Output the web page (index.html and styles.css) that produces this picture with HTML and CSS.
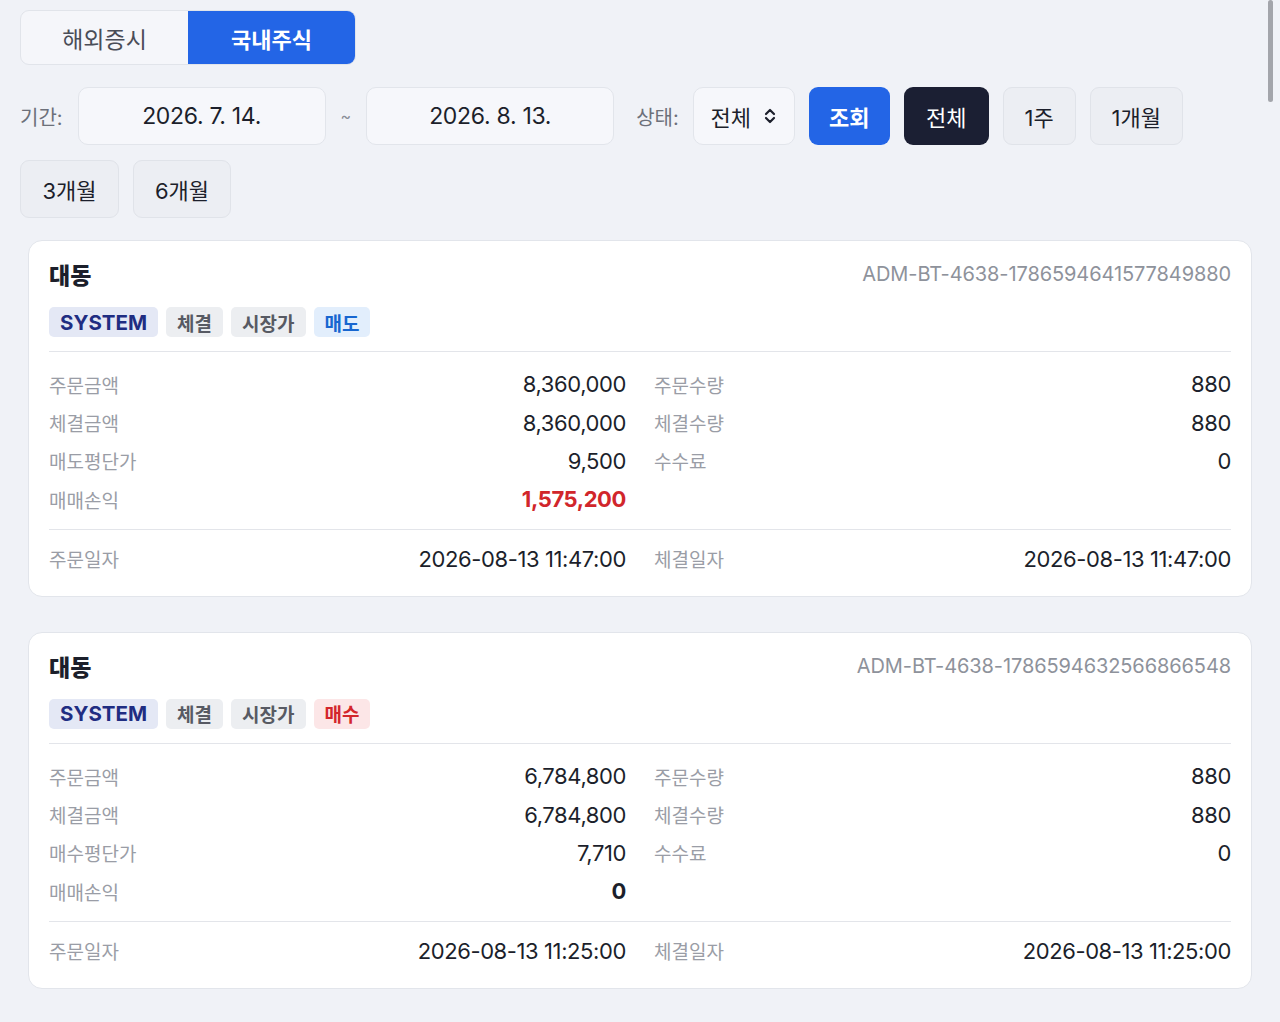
FILE: index.html
```html
<!DOCTYPE html>
<html lang="ko">
<head>
    <meta charset="UTF-8">
    <meta name="viewport" content="width=device-width, initial-scale=1.0">
    <title>주문내역</title>
    <link rel="stylesheet" href="styles.css">
</head>
<body>
    <div class="tabs">
        <button class="tab">해외증시</button>
        <button class="tab active">국내주식</button>
    </div>

    <div class="filters">
        <span class="filterLabel">기간:</span>
        <div class="dateBox">2026. 7. 14.</div>
        <span class="tilde">~</span>
        <div class="dateBox">2026. 8. 13.</div>
        <span class="filterLabel status">상태:</span>
        <div class="selectBox">
            전체
            <svg width="14" height="18" viewBox="0 0 14 18" fill="none" stroke="#1c1f2b" stroke-width="2.2" stroke-linecap="round" stroke-linejoin="round">
                <polyline points="3,7 7,3 11,7"/>
                <polyline points="3,11 7,15 11,11"/>
            </svg>
        </div>
        <button class="btn primary">조회</button>
        <button class="btn dark">전체</button>
        <button class="btn light w73">1주</button>
        <button class="btn light w93">1개월</button>
        <button class="btn light w99">3개월</button>
        <button class="btn light w98">6개월</button>
    </div>

    <div class="cardList">
        <div class="card">
            <div class="cardHead">
                <h2>대동</h2>
                <span class="orderId">ADM-BT-4638-1786594641577849880</span>
            </div>
            <div class="tags">
                <span class="tag system">SYSTEM</span>
                <span class="tag gray">체결</span>
                <span class="tag gray">시장가</span>
                <span class="tag sell">매도</span>
            </div>
            <div class="grid">
                <div class="col">
                    <div class="row"><span class="lbl">주문금액</span><span class="val">8,360,000</span></div>
                    <div class="row"><span class="lbl">체결금액</span><span class="val">8,360,000</span></div>
                    <div class="row"><span class="lbl">매도평단가</span><span class="val">9,500</span></div>
                    <div class="row"><span class="lbl">매매손익</span><span class="val bold red">1,575,200</span></div>
                </div>
                <div class="col">
                    <div class="row"><span class="lbl">주문수량</span><span class="val">880</span></div>
                    <div class="row"><span class="lbl">체결수량</span><span class="val">880</span></div>
                    <div class="row"><span class="lbl">수수료</span><span class="val">0</span></div>
                </div>
            </div>
            <div class="grid dates">
                <div class="row"><span class="lbl">주문일자</span><span class="val">2026-08-13 11:47:00</span></div>
                <div class="row"><span class="lbl">체결일자</span><span class="val">2026-08-13 11:47:00</span></div>
            </div>
        </div>

        <div class="card">
            <div class="cardHead">
                <h2>대동</h2>
                <span class="orderId">ADM-BT-4638-1786594632566866548</span>
            </div>
            <div class="tags">
                <span class="tag system">SYSTEM</span>
                <span class="tag gray">체결</span>
                <span class="tag gray">시장가</span>
                <span class="tag buy">매수</span>
            </div>
            <div class="grid">
                <div class="col">
                    <div class="row"><span class="lbl">주문금액</span><span class="val">6,784,800</span></div>
                    <div class="row"><span class="lbl">체결금액</span><span class="val">6,784,800</span></div>
                    <div class="row"><span class="lbl">매수평단가</span><span class="val">7,710</span></div>
                    <div class="row"><span class="lbl">매매손익</span><span class="val bold">0</span></div>
                </div>
                <div class="col">
                    <div class="row"><span class="lbl">주문수량</span><span class="val">880</span></div>
                    <div class="row"><span class="lbl">체결수량</span><span class="val">880</span></div>
                    <div class="row"><span class="lbl">수수료</span><span class="val">0</span></div>
                </div>
            </div>
            <div class="grid dates">
                <div class="row"><span class="lbl">주문일자</span><span class="val">2026-08-13 11:25:00</span></div>
                <div class="row"><span class="lbl">체결일자</span><span class="val">2026-08-13 11:25:00</span></div>
            </div>
        </div>
    </div>

    <div class="scrollThumb"></div>
</body>
</html>
```

FILE: styles.css
```css
html {
    overflow: hidden;
}

body {
    margin: 0;
    padding: 10px 20px;
    background-color: #f0f2f7;
    color: #1c1f2b;
    font-family: Inter, "Noto Sans CJK KR", sans-serif;
}

button {
    font-family: inherit;
    cursor: pointer;
}

/* market tabs */
.tabs {
    display: flex;
    width: 336px;
    height: 55px;
    border: 1px solid #e1e4ea;
    border-radius: 9px;
    overflow: hidden;
    box-sizing: border-box;
    background-color: #f5f6fa;
}

.tab {
    flex: 1;
    border: none;
    background: none;
    font-size: 23px;
    color: #4a4d57;
}

.tab.active {
    background-color: #2365e6;
    color: white;
    font-weight: 700;
    font-size: 22px;
}

/* filter bar */
.filters {
    display: flex;
    flex-wrap: wrap;
    align-items: center;
    gap: 15px 14px;
    margin-top: 22px;
}

.filterLabel {
    font-size: 20px;
    color: #6c707a;
    margin-right: 1px;
}

.filterLabel.status {
    margin-left: 8px;
    margin-right: 0;
}

.tilde {
    font-size: 16px;
    color: #8a8e98;
    margin: 0 1px;
}

.dateBox {
    width: 248px;
    height: 58px;
    box-sizing: border-box;
    display: flex;
    align-items: center;
    justify-content: center;
    font-size: 23px;
    letter-spacing: -0.3px;
    background-color: #f6f7fb;
    border: 1px solid #e2e5eb;
    border-radius: 10px;
}

.selectBox {
    width: 102px;
    height: 58px;
    box-sizing: border-box;
    display: flex;
    align-items: center;
    justify-content: center;
    gap: 12px;
    font-size: 22px;
    background-color: #f6f7fb;
    border: 1px solid #e2e5eb;
    border-radius: 10px;
}

.btn {
    height: 58px;
    padding: 0;
    font-size: 22px;
    white-space: nowrap;
    border-radius: 9px;
    border: 1px solid transparent;
}

.btn.primary {
    background-color: #2365e6;
    color: white;
    font-weight: 700;
    width: 81px;
}

.btn.dark {
    background-color: #1b1f33;
    color: white;
    width: 85px;
}

.btn.light {
    background-color: #eceef3;
    border-color: #e0e3e9;
    color: #1c1f2b;
}

.w73 { width: 73px; }
.w93 { width: 93px; }
.w99 { width: 99px; }
.w98 { width: 98px; }

/* order cards */
.cardList {
    display: flex;
    flex-direction: column;
    gap: 35px;
    margin-top: 22px;
    padding: 0 8px;
}

.card {
    background-color: white;
    border: 1px solid #e2e5eb;
    border-radius: 14px;
    padding: 18px 20px 18px;
}

.cardHead {
    display: flex;
    justify-content: space-between;
    align-items: center;
    height: 30px;
}

.cardHead h2 {
    margin: 0;
    font-size: 23px;
    font-weight: 800;
}

.orderId {
    font-size: 20px;
    letter-spacing: -0.1px;
    color: #8e929b;
}

.tags {
    display: flex;
    gap: 8px;
    margin-top: 18px;
    padding-bottom: 14px;
    border-bottom: 1px solid #e3e5ea;
}

.tag {
    height: 30px;
    display: flex;
    align-items: center;
    padding: 0 11px;
    border-radius: 5px;
    font-size: 19px;
    font-weight: 700;
}

.tag.system {
    background-color: #e4e8f5;
    color: #1f2d82;
    font-size: 20.5px;
}

.tag.gray {
    background-color: #eceef1;
    color: #575a63;
}

.tag.sell {
    background-color: #e2eefc;
    color: #1766d0;
}

.tag.buy {
    background-color: #fce6e7;
    color: #d3262c;
}

.grid {
    display: grid;
    grid-template-columns: 1fr 1fr;
    column-gap: 28px;
    padding: 13px 0 10px;
    border-bottom: 1px solid #e3e5ea;
}

.grid.dates {
    padding: 10px 0 0;
    border-bottom: none;
}

.row {
    display: flex;
    justify-content: space-between;
    align-items: center;
    height: 38.4px;
}

.lbl {
    font-size: 19px;
    color: #9a9da6;
}

.val {
    font-size: 22px;
    letter-spacing: -0.4px;
    color: #1c1f2b;
}

.val.bold {
    font-weight: 700;
}

.val.red {
    color: #d1262b;
}

.scrollThumb {
    position: fixed;
    top: 0;
    right: 7px;
    width: 5px;
    height: 102px;
    border-radius: 3px;
    background-color: #a3a5ab;
}
```
